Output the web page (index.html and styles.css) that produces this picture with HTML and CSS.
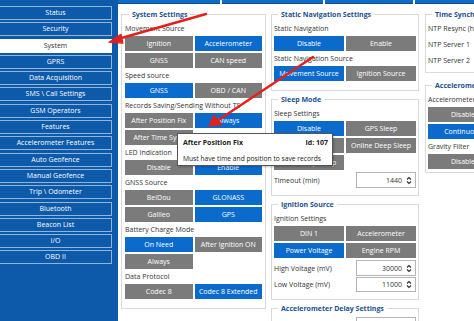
FILE: index.html
```html
<!DOCTYPE html>
<html lang="en">
<head>
  <meta charset="UTF-8" />
  <title>Configurator - System</title>
  <link rel="stylesheet" href="styles.css">
</head>
<body>
  <div class="app">
    <!-- Left menu -->
    <nav class="menu">
      <div class="menu-item">Status</div>
      <div class="menu-item">Security</div>
      <div class="menu-item active">System</div>
      <div class="menu-item">GPRS</div>
      <div class="menu-item">Data Acquisition</div>
      <div class="menu-item">SMS \ Call Settings</div>
      <div class="menu-item">GSM Operators</div>
      <div class="menu-item">Features</div>
      <div class="menu-item">Accelerometer Features</div>
      <div class="menu-item">Auto Geofence</div>
      <div class="menu-item">Manual Geofence</div>
      <div class="menu-item">Trip \ Odometer</div>
      <div class="menu-item">Bluetooth</div>
      <div class="menu-item">Beacon List</div>
      <div class="menu-item">I/O</div>
      <div class="menu-item">OBD II</div>
    </nav>

    <main class="content">
      <div class="tabs">
        <span class="tab t1"></span>
        <span class="tab t2"></span>
        <span class="tab t3"></span>
        <span class="tab t4"></span>
      </div>

      <div class="columns">
        <!-- Column 1 -->
        <div class="col col-1">
          <fieldset class="group">
            <legend>System Settings</legend>
            <div class="field-label">Movement Source</div>
            <div class="btn-grid">
              <span class="opt">Ignition</span>
              <span class="opt on">Accelerometer</span>
              <span class="opt">GNSS</span>
              <span class="opt">CAN speed</span>
            </div>
            <div class="field-label">Speed source</div>
            <div class="btn-grid">
              <span class="opt on">GNSS</span>
              <span class="opt">OBD / CAN</span>
            </div>
            <div class="field-label">Records Saving/Sending Without TS</div>
            <div class="btn-grid">
              <span class="opt">After Position Fix</span>
              <span class="opt on">Always</span>
              <span class="opt">After Time Sync</span>
            </div>
            <div class="field-label">LED Indication</div>
            <div class="btn-grid">
              <span class="opt">Disable</span>
              <span class="opt on">Enable</span>
            </div>
            <div class="field-label">GNSS Source</div>
            <div class="btn-grid">
              <span class="opt">BeiDou</span>
              <span class="opt on">GLONASS</span>
              <span class="opt">Galileo</span>
              <span class="opt on">GPS</span>
            </div>
            <div class="field-label">Battery Charge Mode</div>
            <div class="btn-grid">
              <span class="opt on">On Need</span>
              <span class="opt">After Ignition ON</span>
              <span class="opt">Always</span>
            </div>
            <div class="field-label">Data Protocol</div>
            <div class="btn-grid">
              <span class="opt">Codec 8</span>
              <span class="opt on">Codec 8 Extended</span>
            </div>
          </fieldset>
        </div>

        <!-- Column 2 -->
        <div class="col col-2">
          <fieldset class="group">
            <legend>Static Navigation Settings</legend>
            <div class="field-label">Static Navigation</div>
            <div class="btn-grid">
              <span class="opt on">Disable</span>
              <span class="opt">Enable</span>
            </div>
            <div class="field-label">Static Navigation Source</div>
            <div class="btn-grid">
              <span class="opt on">Movement Source</span>
              <span class="opt">Ignition Source</span>
            </div>
          </fieldset>

          <fieldset class="group">
            <legend>Sleep Mode</legend>
            <div class="field-label">Sleep Settings</div>
            <div class="btn-grid">
              <span class="opt on">Disable</span>
              <span class="opt">GPS Sleep</span>
              <span class="opt">Deep Sleep</span>
              <span class="opt">Online Deep Sleep</span>
              <span class="opt">Ultra Deep Sleep</span>
            </div>
            <div class="num-row">
              <span>Timeout (min)</span>
              <span class="num">1440<svg class="spin" width="6" height="9" viewBox="0 0 6 9"><path d="M1 3.5 3 1.5 5 3.5M1 5.5 3 7.5 5 5.5" fill="none" stroke="#333" stroke-width="1.2"/></svg></span>
            </div>
          </fieldset>

          <fieldset class="group">
            <legend>Ignition Source</legend>
            <div class="field-label">Ignition Settings</div>
            <div class="btn-grid">
              <span class="opt">DIN 1</span>
              <span class="opt">Accelerometer</span>
              <span class="opt on">Power Voltage</span>
              <span class="opt">Engine RPM</span>
            </div>
            <div class="num-row">
              <span>High Voltage (mV)</span>
              <span class="num">30000<svg class="spin" width="6" height="9" viewBox="0 0 6 9"><path d="M1 3.5 3 1.5 5 3.5M1 5.5 3 7.5 5 5.5" fill="none" stroke="#333" stroke-width="1.2"/></svg></span>
            </div>
            <div class="num-row">
              <span>Low Voltage (mV)</span>
              <span class="num">11000<svg class="spin" width="6" height="9" viewBox="0 0 6 9"><path d="M1 3.5 3 1.5 5 3.5M1 5.5 3 7.5 5 5.5" fill="none" stroke="#333" stroke-width="1.2"/></svg></span>
            </div>
          </fieldset>

          <fieldset class="group">
            <legend>Accelerometer Delay Settings</legend>
            <div class="num-row">
              <span>Movement Start Delay (s)</span>
              <span class="num">5<svg class="spin" width="6" height="9" viewBox="0 0 6 9"><path d="M1 3.5 3 1.5 5 3.5M1 5.5 3 7.5 5 5.5" fill="none" stroke="#333" stroke-width="1.2"/></svg></span>
            </div>
          </fieldset>
        </div>

        <!-- Column 3 -->
        <div class="col col-3">
          <fieldset class="group">
            <legend>Time Synchronization</legend>
            <div class="text-row">NTP Resync (h)</div>
            <div class="text-row">NTP Server 1</div>
            <div class="text-row">NTP Server 2</div>
          </fieldset>

          <fieldset class="group">
            <legend>Accelerometer Auto Calibration</legend>
            <div class="field-label">Accelerometer Calibration</div>
            <div class="btn-grid">
              <span class="opt">Disable</span>
              <span class="opt">Calibrate once</span>
              <span class="opt on">Continuous</span>
            </div>
            <div class="field-label">Gravity Filter</div>
            <div class="btn-grid">
              <span class="opt">Disable</span>
              <span class="opt on">Enable</span>
            </div>
          </fieldset>
        </div>
      </div>
    </main>
  </div>

  <!-- Hover tooltip -->
  <div class="tooltip">
    <div class="tip-head"><b>After Position Fix</b><b>Id: 107</b></div>
    <div class="tip-body">Must have time and position to save records</div>
  </div>

  <!-- Red annotation arrows -->
  <svg class="arrows" width="474" height="321" viewBox="0 0 474 321">
    <g stroke="#e3201b" stroke-width="2.4" stroke-linecap="round" fill="#e3201b">
      <line x1="206" y1="14" x2="118" y2="39" />
      <path d="M109 42 121 34 123 43Z" stroke-width="1" />
      <line x1="313" y1="57" x2="217" y2="121" />
      <path d="M209 126 214 115 222 124Z" stroke-width="1" />
    </g>
  </svg>
</body>
</html>
```

FILE: styles.css
```css
body {
  margin: 0;
  width: 474px;
  height: 321px;
  overflow: hidden;
  position: relative;
  font-family: 'Open Sans', 'Noto Sans', sans-serif;
  font-size: 7px;
  color: #333;
  background: #fff;
}

.app {
  display: flex;
  height: 321px;
}

/* ---------- left menu ---------- */
.menu {
  width: 118px;
  flex: none;
  background-color: #0c5aa9;
  padding-top: 6px;
  box-sizing: border-box;
  display: flex;
  flex-direction: column;
  gap: 2.3px;
}

.menu-item {
  width: 113px;
  height: 14px;
  margin-left: -1px;
  box-sizing: border-box;
  border: 1px solid rgba(255, 255, 255, 0.55);
  color: #fff;
  text-align: center;
  line-height: 12px;
  font-size: 7px;
}

.menu-item.active {
  background: #fff;
  color: #333;
  border-color: #fff;
}

/* ---------- content ---------- */
.content {
  flex: 1;
  overflow: hidden;
}

.tabs {
  display: flex;
  gap: 2px;
  height: 4px;
}

.tab {
  height: 3px;
  background: #0b6dcc;
  border-bottom: 1px solid #1b4a80;
}
.t1 { width: 103px; }
.t2 { width: 103px; }
.t3 { width: 89px; }
.t4 { width: 60px; }

.columns {
  display: flex;
  padding: 5px 0 0 3px;
}

.col {
  flex: none;
  display: flex;
  flex-direction: column;
}
.col-1 { width: 145px; }
.col-2 { width: 148px; margin-left: 5px; }
.col-3 { width: 148px; margin-left: 6px; }

.group {
  margin: 0;
  padding: 1px 3px 9px;
  border: 1px solid #dadada;
  min-width: 0;
}

.col-2 .group + .group { margin-top: 3px; }
.col-2 .group { padding: 1px 2px 9px; }
.col-2 .group + .group { padding-bottom: 7px; }

.group legend {
  margin-left: 4px;
  padding: 0 3px;
  font-size: 7px;
  line-height: 11px;
  font-weight: bold;
  color: #1d508f;
  white-space: nowrap;
}

.field-label {
  height: 15px;
  line-height: 16px;
  white-space: nowrap;
}

.btn-grid {
  display: grid;
  grid-template-columns: 1fr 1fr;
  gap: 2px;
}

.opt {
  height: 15px;
  line-height: 15px;
  background: #7b7b7b;
  color: #fff;
  text-align: center;
  white-space: nowrap;
  overflow: hidden;
}

.opt.on { background: #0a6bcd; }

.num-row {
  display: flex;
  justify-content: space-between;
  align-items: center;
  margin-top: 2px;
  height: 16px;
  white-space: nowrap;
}

.num-row + .num-row { margin-top: 1px; height: 15px; }

.num {
  width: 60px;
  height: 100%;
  box-sizing: border-box;
  border: 1px solid #b5b5b5;
  display: flex;
  justify-content: flex-end;
  align-items: center;
  gap: 4px;
  padding-right: 3px;
}

.col-3 .group { padding: 1px 2px 3px; }
.col-3 .group + .group { margin-top: 7px; }

.text-row {
  height: 16px;
  line-height: 16px;
  white-space: nowrap;
}

/* ---------- overlays ---------- */
.tooltip {
  position: absolute;
  left: 177px;
  top: 133px;
  width: 156px;
  height: 33px;
  box-sizing: border-box;
  background: #fff;
  border: 1px solid #555;
  box-shadow: 1px 1px 2px rgba(0, 0, 0, 0.25);
  padding: 3px 4px 0 5px;
  font-size: 7px;
  color: #222;
}

.tip-head {
  display: flex;
  justify-content: space-between;
  line-height: 12px;
}

.tip-body {
  margin-top: 4px;
  line-height: 11px;
  font-size: 6.7px;
  white-space: nowrap;
}

.arrows {
  position: absolute;
  left: 0;
  top: 0;
}
```
